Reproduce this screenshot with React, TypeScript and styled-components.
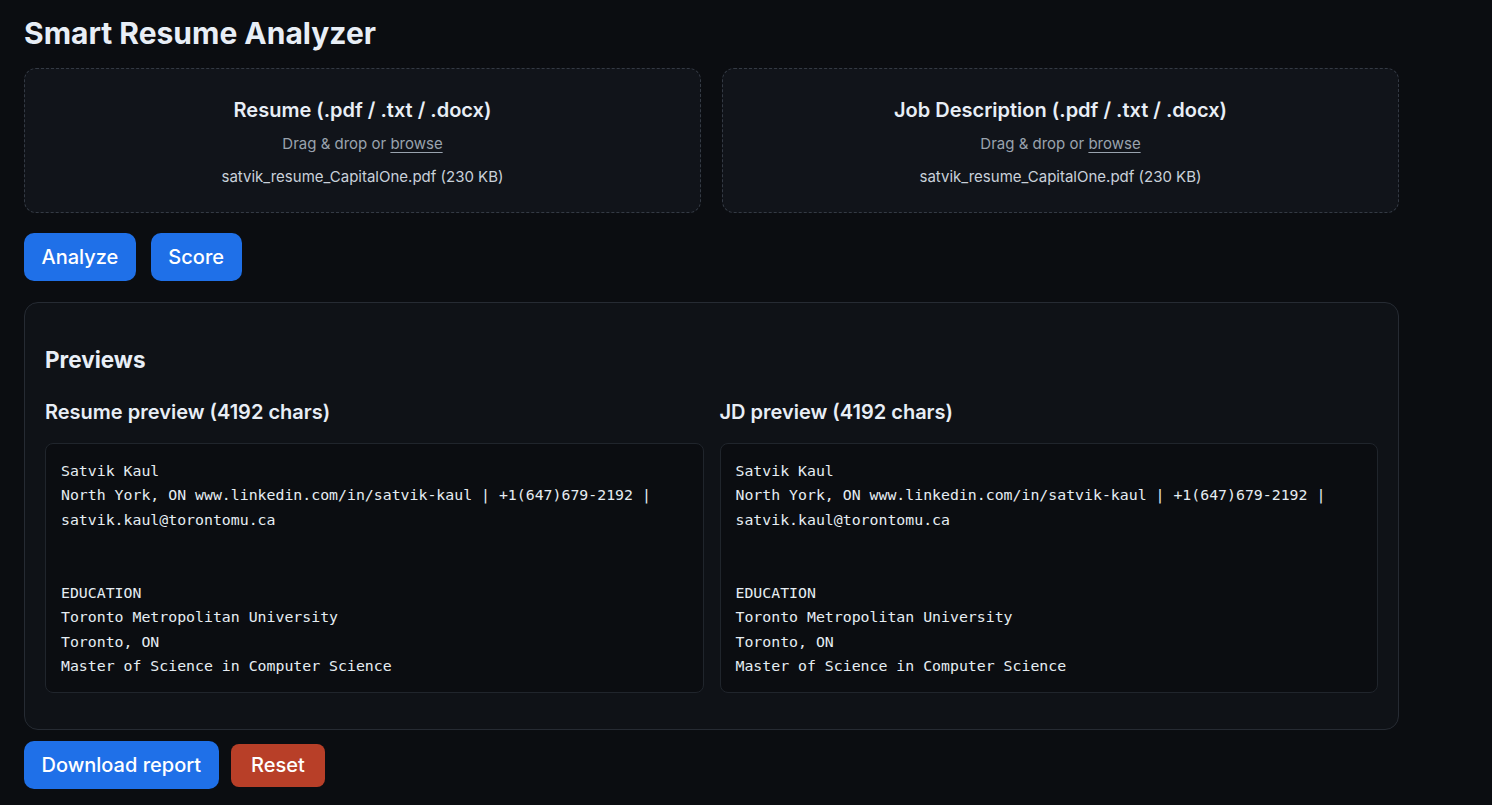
import styled, { createGlobalStyle } from "styled-components";

const GlobalStyle = createGlobalStyle`
  html, body {
    margin: 0;
    padding: 0;
    background: #0b0d11;
    color: #e6edf3;
    font-family: Inter, "Noto Sans", sans-serif;
  }
`;

const Page = styled.div`
  width: 1375px;
  padding: 14px 24px 16px;
`;

const Title = styled.h1`
  margin: 0 0 16px;
  font-size: 30px;
  font-weight: 700;
  line-height: 38px;
  color: #e8eef6;
`;

const DropRow = styled.div`
  display: grid;
  grid-template-columns: 1fr 1fr;
  gap: 21px;
`;

const DropZone = styled.div`
  height: 145px;
  box-sizing: border-box;
  border: 1px dashed #343a44;
  border-radius: 12px;
  background: #11141a;
  display: flex;
  flex-direction: column;
  align-items: center;
  padding-top: 28px;
`;

const DropTitle = styled.div`
  font-size: 20px;
  font-weight: 600;
  line-height: 26px;
  color: #e8eef6;
`;

const DropHint = styled.div`
  margin-top: 11px;
  font-size: 15px;
  line-height: 20px;
  color: #99a3ae;
`;

const Browse = styled.span`
  text-decoration: underline;
  text-underline-offset: 3px;
`;

const FileName = styled.div`
  margin-top: 13px;
  font-size: 15px;
  line-height: 20px;
  color: #c9d1da;
`;

const ButtonRow = styled.div<{ $top: number; $gap: number }>`
  display: flex;
  align-items: center;
  gap: ${(p) => p.$gap}px;
  margin-top: ${(p) => p.$top}px;
`;

const Button = styled.button<{ $variant?: "primary" | "danger" }>`
  border: none;
  border-radius: ${(p) => (p.$variant === "danger" ? "8px" : "10px")};
  background: ${(p) => (p.$variant === "danger" ? "#b83f28" : "#1f70e8")};
  color: #ffffff;
  font-family: Inter, "Noto Sans", sans-serif;
  font-size: 20px;
  font-weight: 500;
  height: ${(p) => (p.$variant === "danger" ? "43px" : "48px")};
  padding: 0 ${(p) => (p.$variant === "danger" ? "20.5px" : "17.5px")};
  cursor: pointer;
`;

const Panel = styled.section`
  margin-top: 21px;
  border: 1px solid #262b33;
  border-radius: 14px;
  background: #0f1217;
  padding: 41px 20px 36px;
`;

const PanelTitle = styled.h2`
  margin: 0 0 23px;
  font-size: 22.5px;
  font-weight: 700;
  line-height: 32px;
  color: #e8eef6;
`;

const PreviewGrid = styled.div`
  display: grid;
  grid-template-columns: 1fr 1fr;
  gap: 16px;
`;

const PreviewCol = styled.div`
  display: flex;
  flex-direction: column;
`;

const PreviewTitle = styled.h3`
  margin: 0 0 18px;
  font-size: 20px;
  font-weight: 600;
  line-height: 26px;
  color: #e8eef6;
`;

const PreviewBox = styled.pre`
  margin: 0;
  height: 250px;
  box-sizing: border-box;
  overflow: hidden;
  border: 1px solid #20252c;
  border-radius: 8px;
  background: #0b0d11;
  padding: 15px 15px;
  font-family: "DejaVu Sans Mono", "Liberation Mono", monospace;
  font-size: 14.85px;
  line-height: 24.4px;
  color: #e6edf3;
  white-space: pre-wrap;
  word-break: break-word;
`;

const resumeText = `Satvik Kaul
North York, ON www.linkedin.com/in/satvik-kaul | +1(647)679-2192 | satvik.kaul@torontomu.ca


EDUCATION
Toronto Metropolitan University
Toronto, ON
Master of Science in Computer Science`;

export default function App() {
  return (
    <>
      <GlobalStyle />
      <Page>
        <Title>Smart Resume Analyzer</Title>
        <DropRow>
          <DropZone>
            <DropTitle>Resume (.pdf / .txt / .docx)</DropTitle>
            <DropHint>
              Drag &amp; drop or <Browse>browse</Browse>
            </DropHint>
            <FileName>satvik_resume_CapitalOne.pdf (230 KB)</FileName>
          </DropZone>
          <DropZone>
            <DropTitle>Job Description (.pdf / .txt / .docx)</DropTitle>
            <DropHint>
              Drag &amp; drop or <Browse>browse</Browse>
            </DropHint>
            <FileName>satvik_resume_CapitalOne.pdf (230 KB)</FileName>
          </DropZone>
        </DropRow>
        <ButtonRow $top={20} $gap={15}>
          <Button>Analyze</Button>
          <Button>Score</Button>
        </ButtonRow>
        <Panel>
          <PanelTitle>Previews</PanelTitle>
          <PreviewGrid>
            <PreviewCol>
              <PreviewTitle>Resume preview (4192 chars)</PreviewTitle>
              <PreviewBox>{resumeText}</PreviewBox>
            </PreviewCol>
            <PreviewCol>
              <PreviewTitle>JD preview (4192 chars)</PreviewTitle>
              <PreviewBox>{resumeText}</PreviewBox>
            </PreviewCol>
          </PreviewGrid>
        </Panel>
        <ButtonRow $top={11} $gap={12}>
          <Button>Download report</Button>
          <Button $variant="danger">Reset</Button>
        </ButtonRow>
      </Page>
    </>
  );
}
